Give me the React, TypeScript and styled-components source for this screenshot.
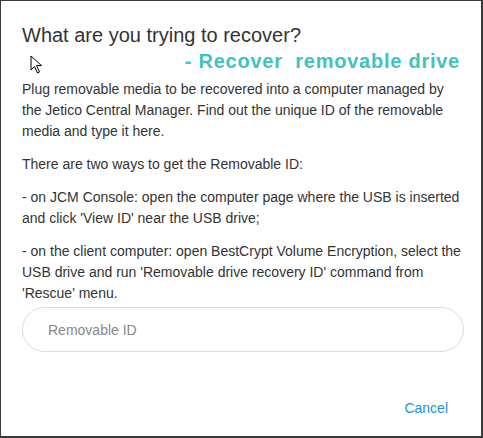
import React from "react";
import styled, { createGlobalStyle } from "styled-components";

const GlobalStyle = createGlobalStyle`
  html, body {
    margin: 0;
    padding: 0;
    background: #fff;
  }
  * { box-sizing: border-box; }
`;

function App() {
  return (
    <>
      <GlobalStyle />
      <Dialog>
        <Title>What are you trying to recover?</Title>
        <Annotation>- Recover&nbsp; removable drive</Annotation>
        <Cursor width="14" height="20" viewBox="0 0 14 20">
          <path
            d="M1 1 L1 15 L4.5 11.5 L7.5 18 L9.5 17 L6.6 10.6 L11.5 10.6 Z"
            fill="#fff"
            stroke="#000"
            strokeWidth="1"
            strokeLinejoin="miter"
          />
        </Cursor>
        <Body>
          <Para>
            Plug removable media to be recovered into a computer managed by the Jetico
            Central Manager. Find out the unique ID of the removable media and type it here.
          </Para>
          <Para>There are two ways to get the Removable ID:</Para>
          <Para>
            - on JCM Console: open the computer page where the USB is inserted and click
            'View ID' near the USB drive;
          </Para>
          <Para>
            - on the client computer: open BestCrypt Volume Encryption, select the USB drive
            and run 'Removable drive recovery ID' command from 'Rescue' menu.
          </Para>
        </Body>
        <Input placeholder="Removable ID" />
        <Footer>
          <LinkButton>Cancel</LinkButton>
        </Footer>
      </Dialog>
    </>
  );
}

export default App;

const Dialog = styled.div`
  position: relative;
  width: 483px;
  height: 438px;
  border: 1px solid #3a3a3a;
  border-right-width: 2px;
  border-bottom-width: 2px;
  padding: 20px 19px 0 21px;
  display: flex;
  flex-direction: column;
  font-family: "Liberation Sans", Arial, sans-serif;
  color: #333;
`;

const Title = styled.h2`
  margin: 0;
  font-size: 20px;
  font-weight: 400;
  line-height: 28px;
  color: #333;
`;

const Annotation = styled.div`
  align-self: flex-end;
  margin-right: 2px;
  font-size: 20px;
  font-weight: 700;
  line-height: 24px;
  letter-spacing: 0.75px;
  color: #3fc3c1;
`;

const Cursor = styled.svg`
  position: absolute;
  left: 29px;
  top: 54px;
`;

const Body = styled.div`
  margin-top: 6px;
  display: flex;
  flex-direction: column;
  gap: 12px;
`;

const Para = styled.p`
  margin: 0;
  font-size: 14px;
  line-height: 21px;
  color: #333;
`;

const Input = styled.input`
  margin-top: 3px;
  width: 442px;
  height: 45px;
  border: 1px solid #dcdcdc;
  border-radius: 23px;
  padding: 0 25px;
  font-family: "Liberation Sans", Arial, sans-serif;
  font-size: 14px;
  color: #333;
  outline: none;
  &::placeholder {
    color: #888;
  }
`;

const Footer = styled.div`
  margin-top: 48px;
  display: flex;
  justify-content: flex-end;
  padding-right: 14px;
`;

const LinkButton = styled.button`
  border: none;
  background: none;
  padding: 0;
  font-family: "Liberation Sans", Arial, sans-serif;
  font-size: 14px;
  color: #1f8fd8;
  cursor: pointer;
`;
